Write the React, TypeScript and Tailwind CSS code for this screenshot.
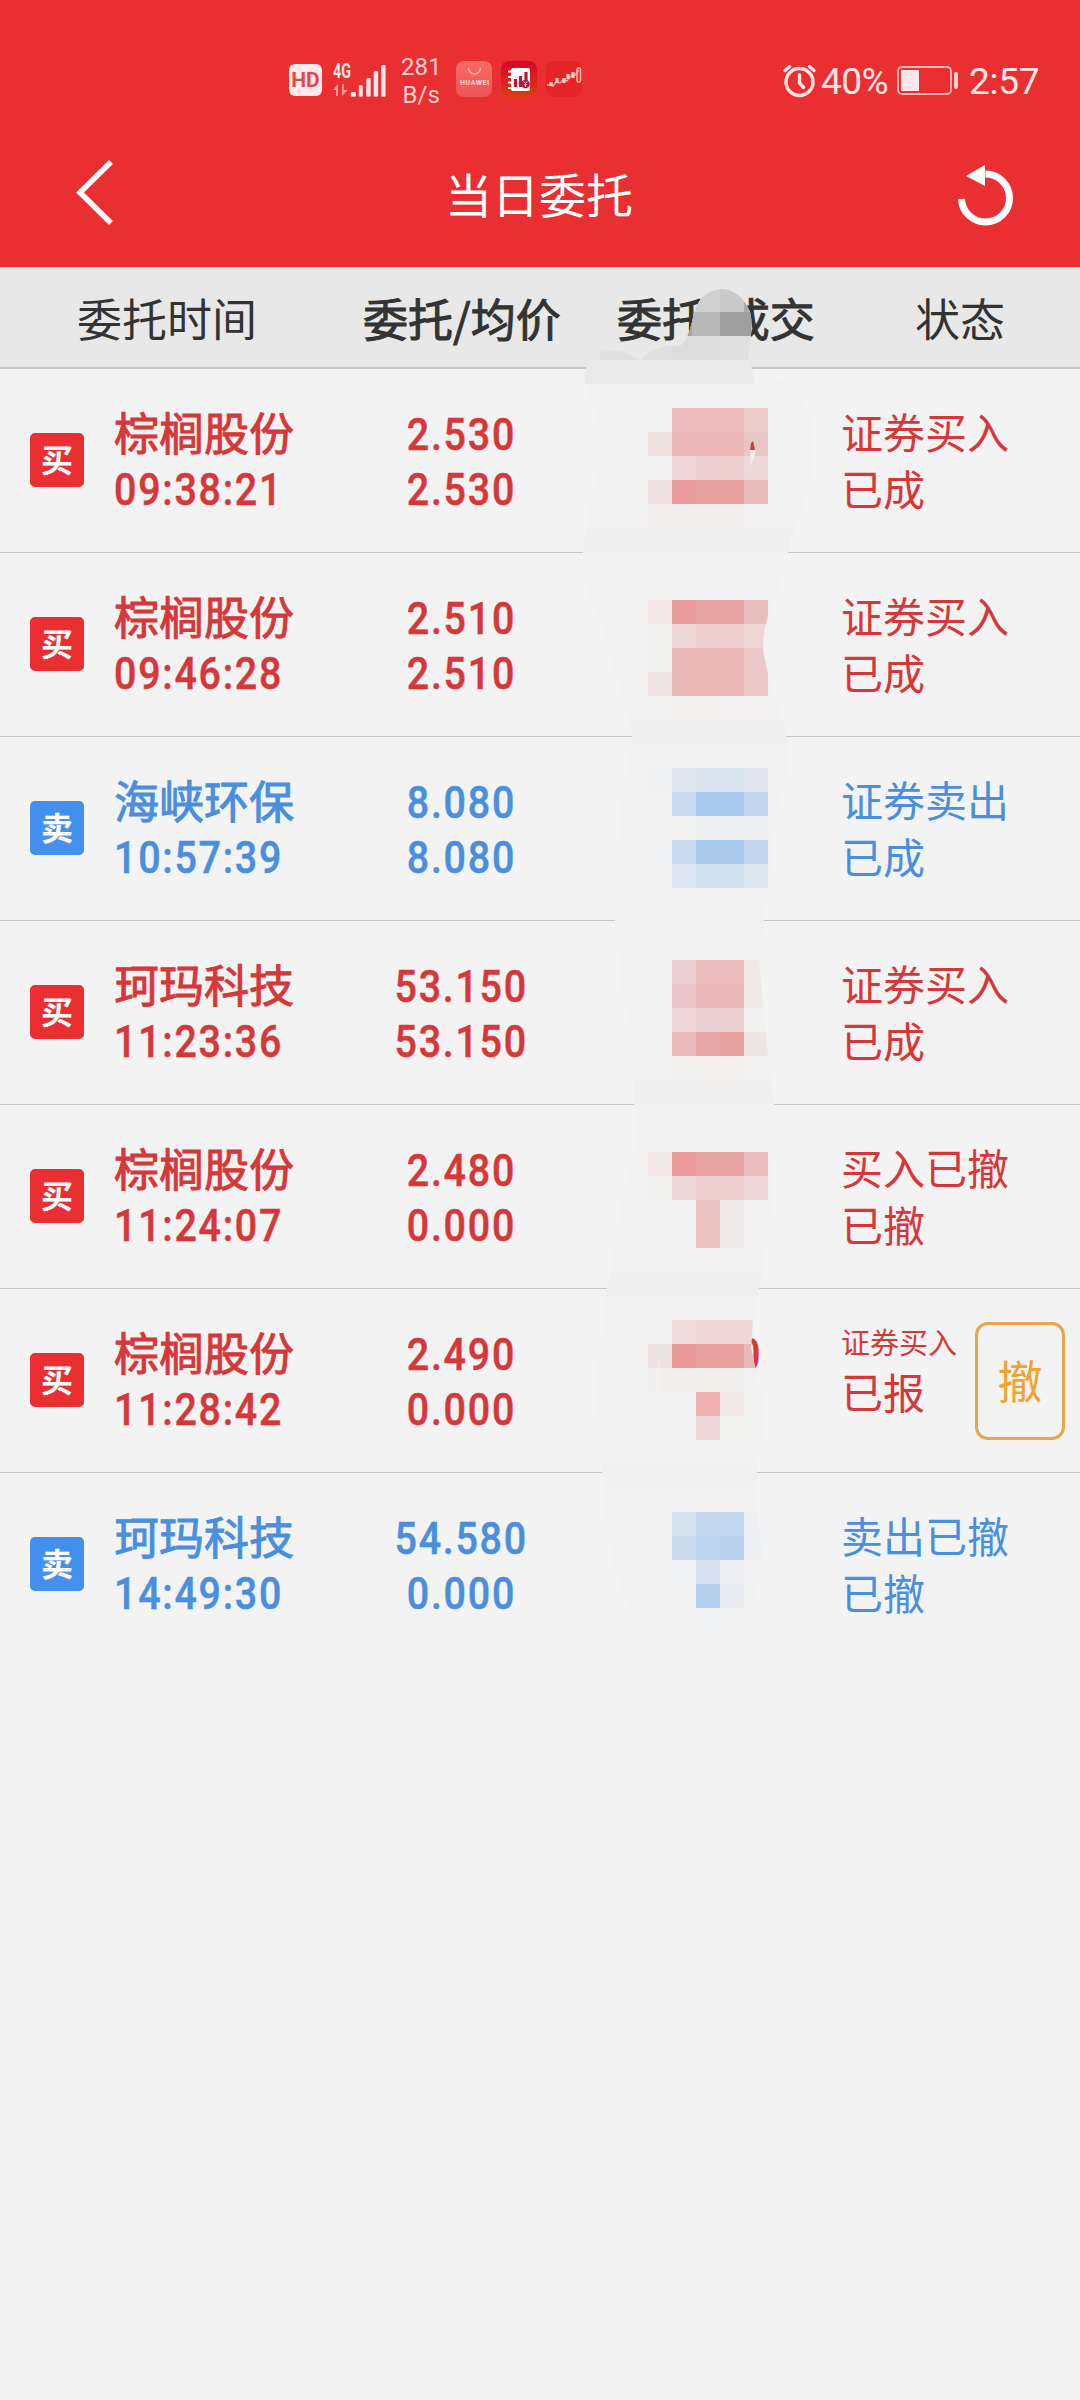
import clsx from 'clsx';

interface Order {
  side: 'buy' | 'sell';
  name: string;
  time: string;
  price: string;
  avgPrice: string;
  action: string;
  status: string;
  amount?: string;
  cancelable?: boolean;
}

const orders: Order[] = [
  { side: 'buy', name: '棕榈股份', time: '09:38:21', price: '2.530', avgPrice: '2.530', action: '证券买入', status: '已成' },
  { side: 'buy', name: '棕榈股份', time: '09:46:28', price: '2.510', avgPrice: '2.510', action: '证券买入', status: '已成' },
  { side: 'sell', name: '海峡环保', time: '10:57:39', price: '8.080', avgPrice: '8.080', action: '证券卖出', status: '已成' },
  { side: 'buy', name: '珂玛科技', time: '11:23:36', price: '53.150', avgPrice: '53.150', action: '证券买入', status: '已成' },
  { side: 'buy', name: '棕榈股份', time: '11:24:07', price: '2.480', avgPrice: '0.000', action: '买入已撤', status: '已撤' },
  { side: 'buy', name: '棕榈股份', time: '11:28:42', price: '2.490', avgPrice: '0.000', action: '证券买入', status: '已报', amount: '0', cancelable: true },
  { side: 'sell', name: '珂玛科技', time: '14:49:30', price: '54.580', avgPrice: '0.000', action: '卖出已撤', status: '已撤' },
];

// Mosaic blocks: x, y, width, height, fill
type Block = [number, number, number, number, string];

const blocks: Block[] = [
  // column title
  [672, 288, 48, 24, '#d0d0d0'], [720, 288, 24, 24, '#c9c9c9'], [744, 288, 24, 24, '#a9a9a9'],
  [672, 312, 24, 24, '#a3a3a3'], [692, 312, 28, 24, '#b9b9b9'], [720, 312, 48, 24, '#9f9f9f'],
  [576, 336, 96, 24, '#e0e0e0'], [672, 336, 48, 24, '#dcdcdc'], [720, 336, 48, 24, '#e0e0e0'],
  [576, 360, 48, 24, '#e9e9e9'], [624, 360, 144, 24, '#ebebeb'],
  // separators
  [576, 528, 240, 24, '#efefef'], [576, 720, 240, 24, '#efefef'], [576, 1080, 240, 24, '#efefef'],
  [576, 1272, 240, 24, '#efefef'], [576, 1464, 240, 24, '#f0f0f0'],
  // 09:38:21
  [672, 408, 72, 24, '#ecbcbe'], [744, 408, 24, 24, '#edcccc'],
  [648, 432, 24, 24, '#f1e2e2'], [672, 432, 72, 24, '#ebb7b8'], [744, 432, 24, 24, '#e9c6c6'],
  [672, 456, 24, 24, '#efd5d7'], [696, 456, 48, 24, '#eed0d1'], [744, 456, 24, 24, '#efd8d9'],
  [648, 480, 24, 24, '#f0e2e2'], [672, 480, 24, 24, '#e99c9b'], [696, 480, 48, 24, '#e8a2a2'], [744, 480, 24, 24, '#e9bbbb'],
  [648, 504, 96, 24, '#f2eeed'],
  // 09:46:28
  [648, 600, 24, 24, '#f2e5e5'], [672, 600, 24, 24, '#ea9b99'], [696, 600, 48, 24, '#e9a4a4'], [744, 600, 24, 24, '#eabdbf'],
  [648, 624, 24, 48, '#f0f0ee'], [672, 624, 24, 24, '#eed5d6'], [696, 624, 48, 24, '#edcdce'], [744, 624, 24, 24, '#eed4d5'],
  [672, 648, 24, 48, '#ecb9ba'], [696, 648, 48, 48, '#ebb8b9'], [744, 648, 24, 48, '#ecc8c9'],
  [648, 672, 24, 24, '#f1e4e4'], [672, 696, 48, 24, '#f1f0ee'], [720, 696, 48, 24, '#f2f0f0'],
  // 10:57:39
  [648, 768, 24, 24, '#eff0f1'], [672, 768, 24, 24, '#dee7f1'], [696, 768, 48, 24, '#d8e5f0'], [744, 768, 24, 24, '#dee5f0'],
  [672, 792, 24, 24, '#c8dbf1'], [696, 792, 48, 24, '#a9caed'], [744, 792, 24, 24, '#c2d6ed'],
  [696, 816, 24, 24, '#edf0f1'], [720, 816, 48, 24, '#eeeff1'],
  [648, 840, 24, 24, '#eff1f2'], [672, 840, 24, 24, '#c8dbf1'], [696, 840, 48, 24, '#a9caed'], [744, 840, 24, 24, '#c2d6ed'],
  [672, 864, 24, 24, '#dde6f1'], [696, 864, 48, 24, '#d4e2f0'], [744, 864, 24, 24, '#dee6f0'],
  // 11:23:36
  [672, 960, 24, 24, '#edd0d2'], [696, 960, 48, 24, '#ebbdbe'], [744, 960, 24, 24, '#f0e9e8'],
  [672, 984, 24, 24, '#ecc6c6'], [696, 984, 48, 24, '#ebb8b9'], [744, 984, 24, 24, '#efeae8'],
  [672, 1008, 24, 24, '#f0d6d8'], [696, 1008, 48, 24, '#eed1d2'], [744, 1008, 24, 24, '#f0f0ee'],
  [672, 1032, 24, 24, '#ebbabb'], [696, 1032, 24, 24, '#e9a6a6'], [720, 1032, 24, 24, '#e8a1a1'], [744, 1032, 24, 24, '#eee6e4'],
  [672, 1056, 24, 24, '#f1f0ee'], [696, 1056, 48, 24, '#f2efed'],
  // 11:24:07
  [648, 1152, 24, 24, '#f2e6e6'], [672, 1152, 24, 24, '#eb9a9a'], [696, 1152, 48, 24, '#e9a4a4'], [744, 1152, 24, 24, '#eabdbf'],
  [648, 1176, 24, 24, '#f0f0ee'], [672, 1176, 24, 24, '#eed5d6'], [696, 1176, 48, 24, '#edcdce'], [744, 1176, 24, 24, '#eed4d6'],
  [696, 1200, 24, 48, '#ecc1c2'], [720, 1200, 24, 48, '#efebea'], [696, 1248, 24, 24, '#f2f0f0'],
  // 11:28:42
  [672, 1320, 24, 24, '#f0dcdc'], [696, 1320, 72, 24, '#efd8d9'],
  [648, 1344, 24, 24, '#f0e3e3'], [672, 1344, 24, 24, '#ea9898'], [696, 1344, 48, 24, '#e8a0a1'], [744, 1344, 24, 24, '#ebb8b9'],
  [648, 1368, 96, 24, '#f1efed'],
  [696, 1392, 24, 24, '#edafaf'], [720, 1392, 24, 24, '#f0e6e5'],
  [696, 1416, 24, 24, '#efd6d8'], [720, 1416, 24, 24, '#f1f1ee'],
  // 14:49:30
  [672, 1512, 24, 24, '#d5e2f0'], [696, 1512, 48, 24, '#c3d7ee'], [744, 1512, 24, 24, '#edeff2'],
  [672, 1536, 24, 24, '#c8dbef'], [696, 1536, 24, 24, '#bdd4ee'], [720, 1536, 24, 24, '#b9d1ee'], [744, 1536, 24, 24, '#eceff2'],
  [672, 1560, 24, 24, '#f0f1f2'], [696, 1560, 24, 24, '#d6e2f0'], [720, 1560, 24, 24, '#edeff2'],
  [696, 1584, 24, 24, '#b2cfee'], [720, 1584, 24, 24, '#e7ebf0'],
  [576, 1608, 120, 92, '#f2f2f2'], [696, 1608, 24, 24, '#eff1f3'], [720, 1608, 60, 92, '#f2f2f2'], [696, 1632, 24, 68, '#f2f2f2'],
];

const brush =
  'M722 289Q741 290 750 312Q754 326 748 353L755 384H767Q778 379 790 384Q804 398 813 427Q815 462 805 500L790 540L788 553L780 583L767 620Q761 640 764 655L770 683L782 717L786 737L789 760L775 823L768 887L764 920L759 960L762 993L768 1057L774 1104L777 1133L768 1233L763 1270L759 1288L753 1320L751 1347L757 1377Q766 1400 763 1433L757 1467L756 1490L759 1527Q764 1558 757 1590Q752 1606 740 1617L726 1630Q729 1655 717 1667Q705 1682 690 1679Q665 1675 647 1647Q630 1625 613 1563L605 1513L602 1472L600 1430Q594 1390 600 1347L607 1288L612 1260L620 1207L630 1167Q637 1145 636 1133L634 1104L633 1080L632 1027L620 983L615 920V873L620 817L627 770L633 743L632 730L615 673L603 630L587 590L583 570V552L586 530Q590 490 602 460Q600 415 585 384Q583 370 590 360L600 359V352Q622 346 640 361Q655 343 680 346Q688 340 692 322Q697 290 722 289Z';

const Mosaic = () => (
  <svg className="pointer-events-none absolute left-0 top-0" width="1080" height="1700" viewBox="0 0 1080 1700">
    <clipPath id="brush">
      <path d={brush} />
    </clipPath>
    <g clipPath="url(#brush)" shapeRendering="crispEdges">
      <rect x="570" y="280" width="260" height="1420" fill="#f1f1f1" />
      {blocks.map(([x, y, w, h, fill]) => (
        <rect key={`${x}-${y}`} x={x} y={y} width={w} height={h} fill={fill} />
      ))}
    </g>
    <path d="M751 443l2-2 2 9h-5z" fill="#cf3a3c" />
    <path d="M750 450h6q-1 8-6 15 1-8 0-15z" fill="#f5eeee" />
    <path d="M659 1359q-4 24-1 48 2-22 1-48z" fill="#f3f1f1" />
  </svg>
);

const StatusBar = () => (
  <div className="flex h-[108px] items-end font-['Roboto',sans-serif] text-[#ffe4e5]">
    <div className="ml-[289px] flex h-[66px] w-[297px] items-start">
      <div className="mt-[22px] flex h-8 w-[33px] items-center justify-center rounded-md bg-[#ffe8e9] text-[21px] leading-none font-bold text-[#e1494c]">
        HD
      </div>
      <svg className="mt-[19px] ml-[10px]" width="56" height="38" viewBox="0 0 56 38" fill="currentColor">
        <text x="1" y="17" fontFamily="Roboto" fontSize="20" fontWeight="700" textLength="18" lengthAdjust="spacingAndGlyphs">4G</text>
        <path d="M1 29l5-6v12H4v-6zM10 23v12l6-6h-4v-6z" fill="#f6999b" />
        <rect x="19" y="31" width="5" height="5" rx="1.5" />
        <rect x="27" y="24" width="4" height="12" rx="1.5" />
        <rect x="34.500" y="17" width="4.500" height="19" rx="1.500" />
        <rect x="42" y="10" width="4.500" height="26" rx="1.500" />
        <rect x="49.500" y="4" width="4.500" height="32" rx="1.500" />
      </svg>
      <div className="mt-[11px] ml-[13px] flex w-[42px] flex-col items-center text-[24px] leading-[28px] text-[#ffd2d3]">
        <span>281</span>
        <span>B/s</span>
      </div>
      <svg className="mt-[18px] ml-[14px] shrink-0" width="130" height="38" viewBox="0 0 130 38">
        <defs>
          <linearGradient id="store" x2="0" y2="1">
            <stop stopColor="#f96a62" />
            <stop offset="1" stopColor="#ec5558" />
          </linearGradient>
          <linearGradient id="ledger" x2="0" y2="1">
            <stop stopColor="#d90429" />
            <stop offset="1" stopColor="#d63f10" />
          </linearGradient>
        </defs>
        <rect x="0" y="1" width="36" height="36" rx="8" fill="url(#store)" />
        <path d="M12.500 8a6 6 0 0 0 12 0" fill="none" stroke="#ffc1bd" strokeWidth="1.300" />
        <text x="4" y="25" fontFamily="Roboto" fontSize="7" fontWeight="700" fill="#ffd9d6" textLength="29">HUAWEI</text>
        <rect x="45" y="1" width="36" height="36" rx="8" fill="url(#ledger)" />
        <rect x="55" y="8" width="19" height="23" rx="2" fill="#fff" />
        <path d="M52 11.500h5M52 17h5M52 22.500h5M52 28h5" stroke="#fff" strokeWidth="2" />
        <path d="M59.500 27v-8M64.500 27V16M70 21v-9" stroke="#c1123a" strokeWidth="3.200" />
        <circle cx="69.500" cy="24" r="4.300" fill="#c1123a" />
        <path d="M67.800 21.500l1.700 2 1.700-2M69.500 23.500v3.500M68 24.800h3" stroke="#fff" strokeWidth=".8" fill="none" />
        <rect x="90" y="1" width="36" height="36" rx="8" fill="#e52426" />
        <path d="M91 25h3l3 1 3-4 4 1 3-3 4 1 4-5 4-1 4-5" fill="none" stroke="#f3a19b" strokeWidth="1.500" />
        <path d="M95 22v4M101 18v5M108 18v5M112 14v5M117 12v6" stroke="#ffd0c8" strokeWidth="3.200" />
        <rect x="121" y="8" width="3.500" height="14" rx="1.500" fill="none" stroke="#f7b3a9" strokeWidth="1.600" />
      </svg>
    </div>
    <div className="ml-[196px] flex h-[54px] items-center">
      <svg width="35" height="34" viewBox="0 0 35 34" fill="none" stroke="currentColor" strokeWidth="3.400" strokeLinecap="round">
        <circle cx="17.500" cy="18" r="13.500" />
        <path d="M17.500 11v8l4 4.500M3 6.500l4.500-4M32 6.500l-4.500-4" />
      </svg>
      <span className="ml-[4px] w-[68px] text-[37px] leading-none tracking-[-0.5px]">40%</span>
      <svg className="ml-[8px]" width="62" height="30" viewBox="0 0 62 30">
        <rect x="1" y="1" width="53" height="27" rx="4" fill="none" stroke="#ffb9bb" strokeWidth="1.800" />
        <rect x="4" y="4" width="18" height="21" rx="1" fill="#ffe8e9" />
        <rect x="57" y="6" width="4" height="17" rx="2" fill="#ffd2d3" />
      </svg>
      <span className="ml-[10px] text-[37px] leading-none tracking-[-0.3px]">2:57</span>
    </div>
  </div>
);

const Header = () => (
  <header className="h-[267px] bg-[#e92f31]">
    <StatusBar />
    <div className="flex h-[159px] items-start pl-[76px]">
      <svg className="mt-[51px]" width="60" height="68" viewBox="0 0 60 68" fill="none" stroke="#fff" strokeWidth="5.500">
        <path d="M35 3L4 33.500 35 64" />
      </svg>
      <h1 className="mt-[59px] ml-[309px] w-[513px] text-[47px] leading-[52px] text-white">当日委托</h1>
      <svg className="mt-[56px]" width="56" height="62" viewBox="0 0 56 62">
        <path d="M3.500 35a24 24 0 1 0 24-25" fill="none" stroke="#fff" strokeWidth="7" />
        <path d="M8 12L27 1v21z" fill="#fff" />
      </svg>
    </div>
  </header>
);

const Digits = ({ children, center }: { children: string; center?: boolean }) => (
  <span
    className={clsx(
      "inline-block scale-x-[0.875] font-['Roboto',sans-serif] text-[45px] leading-[55px] font-medium tracking-[2px] whitespace-nowrap [-webkit-text-stroke:0.5px]",
      center ? 'origin-center' : 'origin-left',
    )}
  >
    {children}
  </span>
);

const OrderRow = ({ order, last }: { order: Order; last: boolean }) => {
  const buy = order.side === 'buy';
  return (
    <li
      className={clsx(
        'flex h-[184px]',
        !last && 'border-b border-[#c6c6c6]',
        buy ? 'text-[#d6383a]' : 'text-[#4a8fdd]',
      )}
    >
      <div
        className={clsx(
          'mt-[64px] ml-[30px] flex size-[54px] items-center justify-center rounded-[5px] pb-[4px] text-[32px] leading-none font-bold text-white',
          buy ? 'bg-[#e92f31]' : 'bg-[#4490ee]',
        )}
      >
        {buy ? '买' : '卖'}
      </div>
      <div className="mt-[35px] ml-[30px] flex w-[231px] flex-col items-start">
        <span className="mb-[3px] text-[45px] leading-[55px] [-webkit-text-stroke:1px]">{order.name}</span>
        <Digits>{order.time}</Digits>
      </div>
      <div className="mt-[38px] flex w-[232px] flex-col items-center">
        <Digits center>{order.price}</Digits>
        <Digits center>{order.avgPrice}</Digits>
      </div>
      <div className="mt-[38px] w-[189px] text-right">{order.amount && <Digits>{order.amount}</Digits>}</div>
      {order.cancelable ? (
        <>
          <div className="mt-[32px] ml-[75px] flex w-[116px] flex-col whitespace-nowrap">
            <span className="text-[29px] leading-[40px]">{order.action}</span>
            <span className="text-[42px] leading-[60px]">{order.status}</span>
          </div>
          <button className="mt-[33px] ml-[18px] h-[118px] w-[90px] rounded-[13px] border-3 border-[#e6a748] pb-[3px] text-[45px] leading-none text-[#f0a32f]">
            撤
          </button>
        </>
      ) : (
        <div className="mt-[33px] ml-[75px] flex flex-col text-[42px] leading-[57px]">
          <span>{order.action}</span>
          <span>{order.status}</span>
        </div>
      )}
    </li>
  );
};

export default function App() {
  return (
    <div className="relative h-[2400px] w-[1080px] overflow-hidden bg-[#f3f3f3] font-['Noto_Sans_CJK_SC',sans-serif]">
      <Header />
      <div className="flex h-[102px] items-center border-b-2 border-[#c6c6c6] bg-[#e8e8e8] text-[45px] leading-none whitespace-nowrap text-[#333]">
        <span className="ml-[77px] w-[286px]">委托时间</span>
        <span className="w-[254px] [-webkit-text-stroke:1px]">委托/均价</span>
        <span className="w-[298px] [-webkit-text-stroke:1px]">委托/成交</span>
        <span>状态</span>
      </div>
      <ul>
        {orders.map((order, i) => (
          <OrderRow key={order.time} order={order} last={i === orders.length - 1} />
        ))}
      </ul>
      <Mosaic />
    </div>
  );
}
